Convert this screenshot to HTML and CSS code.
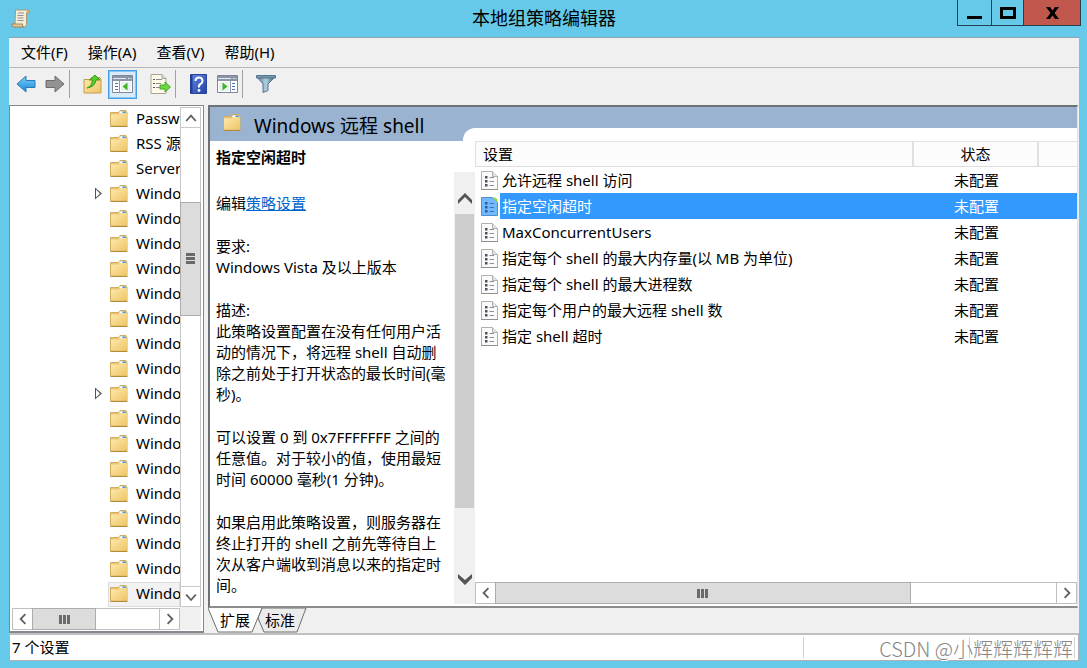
FILE: index.html
```html
<!DOCTYPE html>
<html lang="zh-CN">
<head>
    <meta charset="UTF-8">
    <meta name="viewport" content="width=device-width, initial-scale=1.0">
    <title>本地组策略编辑器</title>
    <link rel="stylesheet" href="styles.css">
</head>
<body>

<svg class="defs" aria-hidden="true">
    <defs>
        <linearGradient id="folderFill" x1="0" y1="0" x2="1" y2="1">
            <stop offset="0" stop-color="#ffe9ac"/>
            <stop offset="1" stop-color="#edc566"/>
        </linearGradient>
        <linearGradient id="blueFill" x1="0" y1="0" x2="0" y2="1">
            <stop offset="0" stop-color="#7fd0f8"/>
            <stop offset="1" stop-color="#1288dc"/>
        </linearGradient>
        <linearGradient id="helpFill" x1="0" y1="0" x2="1" y2="1">
            <stop offset="0" stop-color="#6288e4"/>
            <stop offset="1" stop-color="#2140a8"/>
        </linearGradient>
        <linearGradient id="funnelFill" x1="0" y1="0" x2="1" y2="0">
            <stop offset="0" stop-color="#4d7898"/>
            <stop offset="0.5" stop-color="#b4d0e2"/>
            <stop offset="1" stop-color="#35566f"/>
        </linearGradient>
        <symbol id="folder" viewBox="0 0 18 17">
            <path d="M0.5 2.5h8l1.5-2h6l1 2v13.500h-16.500z" fill="#e6c575" stroke="#cfac62"/>
            <path d="M9.500 1.500h6v2h-6z" fill="#fff"/>
            <path d="M12.500 1.500h3v1.500h-3z" fill="#2f95e8"/>
            <path d="M1 4.500h7.500l1.500-1h7v12h-16z" fill="url(#folderFill)"/>
            <path d="M0.500 16.500h17" stroke="#b48a3c"/>
        </symbol>
        <symbol id="policy" viewBox="0 0 17 19">
            <path d="M0.500 0.500h11l5 5v13h-16z" fill="#fafafa" stroke="#b0b0b0"/>
            <path d="M11.500 0.500v5h5" fill="#e4e4e4" stroke="#b0b0b0"/>
            <path d="M4 5h2.500v2.500H4zM4 9h2.500v2.500H4zM4 13h2.500v2.500H4z" fill="#505062"/>
            <path d="M8.500 6.500h4.500M8.500 10.500h4.500M8.500 14.500h4.500" stroke="#8c8ca0"/>
            <path d="M0 18.500h17" stroke="#909090"/>
        </symbol>
        <symbol id="policy-on" viewBox="0 0 17 19">
            <path d="M0.500 0.500h11l5 5v13h-16z" fill="#74b9fb" stroke="#4b8fd4"/>
            <path d="M11.500 0.500l5 5v-3l-2-2z" fill="#a4dc38"/>
            <path d="M4 5h2.500v2.500H4zM4 9h2.500v2.500H4zM4 13h2.500v2.500H4z" fill="#1c5ca8"/>
            <path d="M8.500 6.500h4.500M8.500 10.500h4.500M8.500 14.500h4.500" stroke="#3874be"/>
        </symbol>
        <symbol id="chev-up" viewBox="0 0 10 10"><path d="M1 7.500l4-4.500 4 4.500" fill="none" stroke="#606060" stroke-width="1.500"/></symbol>
        <symbol id="chev-down" viewBox="0 0 10 10"><path d="M1 3l4 4.500L9 3" fill="none" stroke="#606060" stroke-width="1.500"/></symbol>
        <symbol id="chev-left" viewBox="0 0 10 10"><path d="M7 1L3 5l4 4" fill="none" stroke="#606060" stroke-width="1.500"/></symbol>
        <symbol id="chev-right" viewBox="0 0 10 10"><path d="M3 1l4 4-4 4" fill="none" stroke="#606060" stroke-width="1.500"/></symbol>
    </defs>
</svg>

<div class="window">
    <header class="titlebar">
        <svg class="app-icon" width="20" height="20" viewBox="0 0 20 20">
            <path d="M4.500 1h13q1.500 1 0 3h-2v11.500q0 2.500-2.500 2.500H3q-2.500 0-2-3h3z" fill="#f7edd2" stroke="#a89878"/>
            <path d="M15.500 4q-0.500-3 2-3 1.500 1.500 0 3z" fill="#d3a865"/>
            <path d="M1 15h10.500q-0.500 3 1.500 3H3q-2.500 0-2-3z" fill="#e0c795" stroke="#a08a62"/>
            <path d="M7 4h6M6.500 6.500h6M6.500 9h6M6.500 11.500h6" stroke="#8891a4"/>
        </svg>
        <h1 class="title">本地组策略编辑器</h1>
        <div class="window-buttons">
            <button class="win-btn minimize" aria-label="最小化"><svg width="15" height="12"><path d="M0 9h15v3H0z"/></svg></button>
            <button class="win-btn maximize" aria-label="最大化"><svg width="16" height="12"><path d="M1.500 1.500h13v9h-13z" fill="none" stroke="#000" stroke-width="3"/></svg></button>
            <button class="win-btn close" aria-label="关闭"><svg width="13" height="12"><path d="M0 0h4l2.500 3.500L9 0h4L8.500 6l4.500 6H9L6.500 8.500 4 12H0l4.500-6z"/></svg></button>
        </div>
    </header>

    <div class="client">
        <nav class="menubar">
            <button class="menu">文件(F)</button>
            <button class="menu">操作(A)</button>
            <button class="menu">查看(V)</button>
            <button class="menu">帮助(H)</button>
        </nav>

        <div class="toolbar">
            <button class="tool" aria-label="后退">
                <svg width="20" height="18" viewBox="0 0 20 18"><path d="M1 9l9-8v4.500h9v7h-9V17z" fill="url(#blueFill)" stroke="#2d7ab5"/></svg>
            </button>
            <button class="tool" aria-label="前进">
                <svg width="20" height="18" viewBox="0 0 20 18"><path d="M19 9l-9-8v4.500H1v7h9V17z" fill="#929292" stroke="#6c6c6c"/></svg>
            </button>
            <span class="separator"></span>
            <button class="tool" aria-label="上一级">
                <svg width="19" height="20" viewBox="0 0 19 20">
                    <path d="M1 5.500h6l1.500-2h8.500l1 2V19H1z" fill="url(#folderFill)" stroke="#c19c50"/>
                    <path d="M4 14Q9 12 9.500 6H6.500L12 1l5 5h-4Q12 13 4 14z" fill="#55cb28" stroke="#3b9c22"/>
                </svg>
            </button>
            <button class="tool active" aria-label="显示/隐藏控制台树">
                <svg width="21" height="18" viewBox="0 0 21 18">
                    <path d="M0.500 0.500h20v17H0.500z" fill="#fff" stroke="#7f8797"/>
                    <path d="M1 1h19v5H1z" fill="#8b95a8"/>
                    <path d="M1 3.500h13M16 3.500h1.500M18.500 3.500h1" stroke="#e4e9f0"/>
                    <path d="M7.500 6v11" stroke="#9098a8"/>
                    <path d="M3 8.500h3M3 11.500h3M3 14.500h3" stroke="#4679b9"/>
                    <path d="M9 7h10v9H9z" fill="#edf1f5"/>
                    <path d="M15.500 7.500v8l-5-4z" fill="#3db51e"/>
                </svg>
            </button>
            <button class="tool" aria-label="导出列表">
                <svg width="21" height="20" viewBox="0 0 21 20">
                    <path d="M1 0.500h11l4 4v15H1z" fill="#fffbe8" stroke="#a8a595"/>
                    <path d="M12 0.500v4h4" fill="#ddd" stroke="#a8a595"/>
                    <path d="M3 5.500h2M3 9.500h2M3 13.500h2" stroke="#555"/>
                    <path d="M6 5.500h6M6 9.500h5M6 13.500h5" stroke="#8a8a9e"/>
                    <path d="M10 11h5V8l5.500 5-5.500 5v-3h-5z" fill="#6bd63e" stroke="#42a82a"/>
                </svg>
            </button>
            <span class="separator"></span>
            <button class="tool" aria-label="帮助">
                <svg width="17" height="20" viewBox="0 0 17 20">
                    <path d="M0.500 0.500h16v19H0.500z" fill="url(#helpFill)" stroke="#2b469c"/>
                    <path d="M1.500 1v18" stroke="#203c96" stroke-width="2"/>
                    <path d="M5.500 7Q5.500 3.500 9 3.500T12.500 7Q12.500 9 10.500 10T9 13.500" fill="none" stroke="#fff" stroke-width="2"/>
                    <circle cx="9" cy="16.500" r="1.400" fill="#fff"/>
                </svg>
            </button>
            <button class="tool" aria-label="显示/隐藏操作窗格">
                <svg width="21" height="18" viewBox="0 0 21 18">
                    <path d="M0.500 0.500h20v17H0.500z" fill="#fff" stroke="#7f8797"/>
                    <path d="M1 1h19v5H1z" fill="#8b95a8"/>
                    <path d="M1 3.500h13M16 3.500h1.500M18.500 3.500h1" stroke="#e4e9f0"/>
                    <path d="M13.500 6v11" stroke="#9098a8"/>
                    <path d="M15 8.500h3M15 11.500h3M15 14.500h3" stroke="#4679b9"/>
                    <path d="M2 7h10v9H2z" fill="#edf1f5"/>
                    <path d="M5.500 7.500v8l5-4z" fill="#3db51e"/>
                </svg>
            </button>
            <span class="separator"></span>
            <button class="tool" aria-label="筛选">
                <svg width="20" height="18" viewBox="0 0 20 18">
                    <path d="M1 2l6 7v8.500l5-2V9l7-7z" fill="url(#funnelFill)" stroke="#577990"/>
                    <path d="M0.500 0.500h19v2.500H0.500z" fill="#7596ab" stroke="#54768e"/>
                </svg>
            </button>
        </div>

        <main class="panes">
            <section class="tree-pane">
                <ul class="tree">
                    <li class="node"><svg class="folder"><use href="#folder"/></svg><span class="node-label">Password</span></li>
                    <li class="node"><svg class="folder"><use href="#folder"/></svg><span class="node-label">RSS 源</span></li>
                    <li class="node"><svg class="folder"><use href="#folder"/></svg><span class="node-label">Server</span></li>
                    <li class="node has-children"><svg class="folder"><use href="#folder"/></svg><span class="node-label">Windows</span></li>
                    <li class="node"><svg class="folder"><use href="#folder"/></svg><span class="node-label">Windows</span></li>
                    <li class="node"><svg class="folder"><use href="#folder"/></svg><span class="node-label">Windows</span></li>
                    <li class="node"><svg class="folder"><use href="#folder"/></svg><span class="node-label">Windows</span></li>
                    <li class="node"><svg class="folder"><use href="#folder"/></svg><span class="node-label">Windows</span></li>
                    <li class="node"><svg class="folder"><use href="#folder"/></svg><span class="node-label">Windows</span></li>
                    <li class="node"><svg class="folder"><use href="#folder"/></svg><span class="node-label">Windows</span></li>
                    <li class="node"><svg class="folder"><use href="#folder"/></svg><span class="node-label">Windows</span></li>
                    <li class="node has-children"><svg class="folder"><use href="#folder"/></svg><span class="node-label">Windows</span></li>
                    <li class="node"><svg class="folder"><use href="#folder"/></svg><span class="node-label">Windows</span></li>
                    <li class="node"><svg class="folder"><use href="#folder"/></svg><span class="node-label">Windows</span></li>
                    <li class="node"><svg class="folder"><use href="#folder"/></svg><span class="node-label">Windows</span></li>
                    <li class="node"><svg class="folder"><use href="#folder"/></svg><span class="node-label">Windows</span></li>
                    <li class="node"><svg class="folder"><use href="#folder"/></svg><span class="node-label">Windows</span></li>
                    <li class="node"><svg class="folder"><use href="#folder"/></svg><span class="node-label">Windows</span></li>
                    <li class="node"><svg class="folder"><use href="#folder"/></svg><span class="node-label">Windows</span></li>
                    <li class="node current"><svg class="folder"><use href="#folder"/></svg><span class="node-label">Windows</span></li>
                </ul>
                <div class="scrollbar vertical">
                    <button class="scroll-btn" aria-label="向上"><svg><use href="#chev-up"/></svg></button>
                    <div class="track before"></div>
                    <div class="thumb"><span class="grip"></span></div>
                    <div class="track after"></div>
                    <button class="scroll-btn" aria-label="向下"><svg><use href="#chev-down"/></svg></button>
                </div>
                <div class="scrollbar horizontal">
                    <button class="scroll-btn" aria-label="向左"><svg><use href="#chev-left"/></svg></button>
                    <div class="thumb"><span class="grip"></span></div>
                    <div class="track"></div>
                    <button class="scroll-btn" aria-label="向右"><svg><use href="#chev-right"/></svg></button>
                </div>
                <div class="corner"></div>
            </section>

            <section class="result-pane">
                <div class="result-box">
                    <div class="result-header">
                        <h2 class="result-title"><svg class="folder"><use href="#folder"/></svg>Windows 远程 shell</h2>
                        <div class="header-curve"></div>
                    </div>
                    <div class="result-body">
                        <article class="description">
                            <h3>指定空闲超时</h3>
                            <p class="edit">编辑<a href="#">策略设置</a></p>
                            <p>要求:<br>Windows Vista 及以上版本</p>
                            <p>描述:<br>此策略设置配置在没有任何用户活<br>动的情况下，将远程 shell 自动删<br>除之前处于打开状态的最长时间(毫<br>秒)。</p>
                            <p>可以设置 0 到 0x7FFFFFFF 之间的<br>任意值。对于较小的值，使用最短<br>时间 60000 毫秒(1 分钟)。</p>
                            <p>如果启用此策略设置，则服务器在<br>终止打开的 shell 之前先等待自上<br>次从客户端收到消息以来的指定时<br>间。</p>
                        </article>
                        <div class="desc-scroll">
                            <button class="desc-btn" aria-label="向上"><svg width="16" height="14"><path d="M1 9l7-7 7 7v4L8 6l-7 7z"/></svg></button>
                            <div class="desc-thumb"></div>
                            <button class="desc-btn down" aria-label="向下"><svg width="16" height="14"><path d="M1 1l7 6 7-6v4l-7 7-7-7z"/></svg></button>
                        </div>
                        <div class="list">
                            <table class="settings">
                                <thead>
                                    <tr><th class="name">设置</th><th class="state">状态</th><th class="rest"></th></tr>
                                </thead>
                                <tbody>
                                    <tr><td><div class="setting"><svg><use href="#policy"/></svg><span>允许远程 shell 访问</span></div></td><td>未配置</td><td></td></tr>
                                    <tr class="selected"><td><div class="setting"><svg><use href="#policy-on"/></svg><span>指定空闲超时</span></div></td><td>未配置</td><td></td></tr>
                                    <tr><td><div class="setting"><svg><use href="#policy"/></svg><span>MaxConcurrentUsers</span></div></td><td>未配置</td><td></td></tr>
                                    <tr><td><div class="setting"><svg><use href="#policy"/></svg><span>指定每个 shell 的最大内存量(以 MB 为单位)</span></div></td><td>未配置</td><td></td></tr>
                                    <tr><td><div class="setting"><svg><use href="#policy"/></svg><span>指定每个 shell 的最大进程数</span></div></td><td>未配置</td><td></td></tr>
                                    <tr><td><div class="setting"><svg><use href="#policy"/></svg><span>指定每个用户的最大远程 shell 数</span></div></td><td>未配置</td><td></td></tr>
                                    <tr><td><div class="setting"><svg><use href="#policy"/></svg><span>指定 shell 超时</span></div></td><td>未配置</td><td></td></tr>
                                </tbody>
                            </table>
                            <div class="scrollbar horizontal">
                                <button class="scroll-btn" aria-label="向左"><svg><use href="#chev-left"/></svg></button>
                                <div class="thumb"><span class="grip"></span></div>
                                <div class="track"></div>
                                <button class="scroll-btn" aria-label="向右"><svg><use href="#chev-right"/></svg></button>
                            </div>
                        </div>
                    </div>
                </div>
                <div class="tabs">
                    <svg class="tab-shapes" width="100" height="26" viewBox="0 0 100 26">
                        <path d="M54 0h44l-9 24H56l-6-14z" fill="#ececec" stroke="#6c6c6c"/>
                        <path d="M0 0l10 24h34l10-24z" fill="#fff"/>
                        <path d="M0 0l10 24h34l10-24" fill="none" stroke="#6c6c6c"/>
                    </svg>
                    <button class="tab">扩展</button>
                    <button class="tab">标准</button>
                </div>
            </section>
        </main>

        <footer class="statusbar">
            <span class="status-text">7 个设置</span>
            <span class="status-cell wide"></span>
            <span class="status-cell"></span>
        </footer>
    </div>
    <div class="watermark">CSDN @小辉辉辉辉辉</div>
</div>

</body>
</html>
```

FILE: styles.css
```css
* {
    box-sizing: border-box;
}
body {
    margin: 0;
    background-color: #66c9ea;
    font-family: "Noto Sans", "Noto Sans CJK SC", sans-serif;
    font-size: 15px;
    line-height: 21px;
    color: #000;
}
button {
    font: inherit;
    color: inherit;
    padding: 0;
    border: none;
    background: none;
}
h1, h2, h3, p, ul {
    margin: 0;
    padding: 0;
    font-weight: normal;
}
svg {
    display: block;
    flex: none;
}
.defs {
    position: absolute;
    width: 0;
    height: 0;
}
.window {
    position: relative;
    display: flex;
    flex-direction: column;
    min-height: 100vh;
    padding: 0 8px 7px 9px;
}

/* title bar */
.titlebar {
    display: grid;
    grid-template-columns: 1fr auto 1fr;
    height: 37px;
}
.app-icon {
    margin: 9px 0 0 2px;
}
.title {
    font-size: 18px;
    line-height: 37px;
}
.window-buttons {
    display: flex;
    justify-self: end;
    height: 26px;
    margin-right: -2px;
    border: 1px solid #24424d;
    border-top: none;
}
.win-btn {
    display: flex;
    align-items: center;
    justify-content: center;
    width: 32px;
    border-right: 1px solid #24424d;
}
.win-btn.minimize {
    width: 34px;
}
.win-btn.close {
    width: 56px;
    border-right: none;
    background-color: #c1584e;
}

.client {
    flex: 1;
    display: flex;
    flex-direction: column;
    border-top: 1px solid #8fa5ae;
    background-color: #f0f0f0;
}
.menubar {
    display: flex;
    gap: 20px;
    height: 30px;
    padding-left: 12px;
    border-bottom: 1px solid #b4b7bc;
}
.toolbar {
    display: flex;
    align-items: center;
    height: 37px;
    padding: 0 0 5px 2px;
}
.tool {
    display: flex;
    align-items: center;
    justify-content: center;
    width: 29px;
    height: 29px;
}
.tool.active {
    margin: 0 9px 0 1px;
    border: 1px solid #3f9fe8;
    outline: 1px solid #8cc6f2;
    outline-offset: -2px;
    background-color: #d9ebf9;
}
.separator {
    width: 1px;
    height: 28px;
    margin-right: 8px;
    background-color: #a0a0a0;
}

.panes {
    flex: 1;
    display: grid;
    grid-template-columns: 195px minmax(0, 1fr);
    gap: 4px;
}

/* scroll bars */
.scrollbar {
    display: flex;
    background-color: #fff;
}
.scrollbar.vertical {
    flex-direction: column;
    border: 1px solid #c8c8c8;
}
.scrollbar.horizontal {
    height: 22px;
    border: 1px solid #c0c0c0;
}
.scroll-btn {
    display: flex;
    align-items: center;
    justify-content: center;
    flex: none;
    width: 20px;
    height: 20px;
}
.scroll-btn svg {
    width: 12px;
    height: 12px;
}
.vertical .scroll-btn {
    width: 100%;
    border-bottom: 1px solid #c8c8c8;
}
.vertical .scroll-btn:last-child {
    border-top: 1px solid #c8c8c8;
    border-bottom: none;
}
.horizontal .scroll-btn:last-child {
    border-left: 1px solid #c0c0c0;
}
.thumb {
    display: flex;
    align-items: center;
    justify-content: center;
    background-color: #dcdcdc;
    outline: 1px solid #acacac;
}
.track {
    flex: 1;
}
.grip {
    width: 11px;
    height: 9px;
    background: repeating-linear-gradient(90deg, #6a6a6a 0 3px, transparent 3px 4px);
}
.vertical .grip {
    width: 9px;
    height: 11px;
    background: repeating-linear-gradient(#6a6a6a 0 3px, transparent 3px 4px);
}

/* console tree */
.tree-pane {
    display: grid;
    grid-template-columns: minmax(0, 1fr) 21px;
    grid-template-rows: 1fr 23px;
    padding: 1px 2px 1px 1px;
    border: 1px solid #828790;
    border-bottom-width: 2px;
    background-color: #fff;
}
.tree {
    overflow: hidden;
    list-style: none;
}
.node {
    position: relative;
    display: flex;
    align-items: center;
    height: 25px;
    margin-left: 97px;
    padding: 0 0 2px 2px;
    white-space: nowrap;
}
.node-label {
    padding-left: 8px;
}
.node.current {
    background-color: #f2f2f2;
    border: 1px solid #dcdcdc;
    padding-left: 1px;
}
.node.has-children::before {
    content: "";
    position: absolute;
    left: -13px;
    width: 7px;
    height: 12px;
    background-color: #555;
    clip-path: polygon(0 0, 100% 50%, 0 100%, 0 0, 1px 2px, 1px 10px, 5px 6px, 1px 2px);
}
.folder {
    width: 18px;
    height: 17px;
}
.tree-pane .before {
    flex: 75;
}
.tree-pane .vertical .thumb {
    flex: 113;
}
.tree-pane .after {
    flex: 273;
}
.tree-pane .horizontal {
    margin: 1px 0 0 1px;
}
.tree-pane .horizontal .thumb {
    width: 62px;
}
.corner {
    background-color: #f0f0f0;
}

/* result pane */
.result-pane {
    display: flex;
    flex-direction: column;
}
.result-box {
    flex: 1;
    display: flex;
    flex-direction: column;
    border: 2px solid #6e7277;
    border-right: 1px solid #e3e3e3;
    border-bottom-color: #8c8c8c;
    margin-right: 1px;
    background-color: #fff;
}
.result-header {
    display: flex;
    align-items: flex-end;
    height: 34px;
    background-color: #99b3d1;
}
.result-title {
    display: flex;
    align-items: center;
    gap: 13px;
    width: 253px;
    height: 34px;
    padding: 3px 0 0 13px;
    font-size: 19px;
    line-height: 30px;
    white-space: nowrap;
}
.result-title .folder {
    margin-bottom: 6px;
}
.header-curve {
    flex: 1;
    height: 13px;
    border-top-left-radius: 12px;
    background-color: #fff;
}
.result-body {
    flex: 1;
    display: grid;
    grid-template-columns: 244px 21px minmax(0, 1fr);
}
.description {
    padding: 6px 0 0 6px;
    white-space: nowrap;
}
.description h3 {
    font-size: 15px;
    font-weight: bold;
    margin-bottom: 25px;
}
.description p {
    margin-bottom: 22px;
}
.description p:last-child {
    margin-bottom: 0;
}
.description a {
    color: #0066cc;
}
.desc-scroll {
    display: flex;
    flex-direction: column;
    margin: 31px 0 2px;
    background-color: #f0f0f0;
}
.desc-btn {
    display: flex;
    align-items: flex-end;
    justify-content: center;
    height: 42px;
    padding-bottom: 9px;
    fill: #555;
}
.desc-btn.down {
    height: 32px;
    margin-top: auto;
    padding-bottom: 17px;
}
.desc-thumb {
    height: 68%;
    margin: 0 1px;
    background-color: #cdcdcd;
}

/* settings list */
.list {
    display: flex;
    flex-direction: column;
    justify-content: space-between;
    padding-bottom: 2px;
}
.settings {
    width: 100%;
    table-layout: fixed;
    border-collapse: separate;
    border-spacing: 0;
    white-space: nowrap;
}
.settings th {
    height: 26px;
    padding: 0;
    font-weight: normal;
    border-top: 1px solid #e2e2e2;
    border-bottom: 1px solid #dedede;
    border-right: 2px solid #e0e0e0;
    background-color: #fcfcfc;
}
.settings .name {
    padding-left: 7px;
    text-align: left;
    border-left: 1px solid #e0e0e0;
}
.settings .state {
    width: 125px;
}
.settings .rest {
    width: 38px;
    border-right: none;
}
.settings td {
    height: 26px;
    padding: 0;
    text-align: center;
}
.setting {
    display: flex;
    align-items: center;
    padding-left: 6px;
    text-align: left;
}
.setting svg {
    width: 17px;
    height: 19px;
}
.setting span {
    flex: 1;
    margin-left: 2px;
    padding-left: 2px;
    line-height: 26px;
}
.selected {
    color: #fff;
}
.selected span,
.selected td + td {
    background-color: #3399ff;
}
.list .thumb {
    flex: 413;
}
.list .track {
    flex: 146;
}

/* view tabs */
.tabs {
    position: relative;
    display: flex;
    gap: 15px;
    height: 25px;
    padding-left: 12px;
}
.tab-shapes {
    position: absolute;
    top: 0;
    left: 0;
}
.tab {
    position: relative;
}

.statusbar {
    display: flex;
    height: 28px;
    padding: 2px 3px 2px 2px;
    border: 1px solid #b0b0b0;
    border-top: 2px solid #c0c0c0;
    background-color: #fff;
}
.status-text {
    flex: 1;
}
.status-cell {
    width: 106px;
    border-left: 1px solid #d0d0d0;
    border-right: 1px solid #d0d0d0;
}
.status-cell.wide {
    width: 166px;
    border-right: none;
}
.watermark {
    position: absolute;
    right: 14px;
    bottom: 4px;
    font-family: "Noto Sans CJK SC", sans-serif;
    font-size: 20px;
    font-weight: 300;
    line-height: 30px;
    color: #858585;
    text-shadow: 1px 1px 0 #fff;
}
```
